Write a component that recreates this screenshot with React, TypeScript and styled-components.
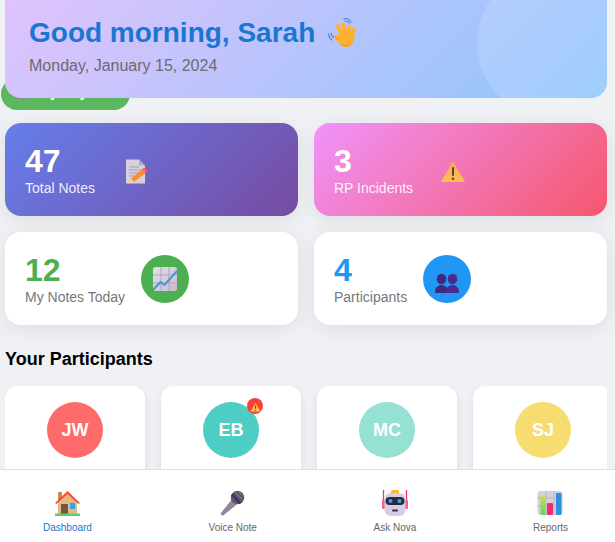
import React from "react";
import styled, { createGlobalStyle } from "styled-components";

const GlobalStyle = createGlobalStyle`
  html, body {
    margin: 0;
    height: 100%;
    overflow: hidden;
    background: #f0f1f5;
    font-family: "Liberation Sans", Arial, sans-serif;
  }
  * { box-sizing: border-box; }
`;

const Page = styled.div`
  position: relative;
  height: 542px;
  overflow: hidden;
  padding: 0 8px 0 5px;
`;

const Header = styled.header`
  position: relative;
  z-index: 1;
  height: 98px;
  padding: 17px 24px 0;
  overflow: hidden;
  border-radius: 0 0 16px 16px;
  background: linear-gradient(135deg, #e0c3fc 0%, #8ec5fc 100%);
  &::after {
    content: "";
    position: absolute;
    top: -32px;
    right: -20px;
    width: 150px;
    height: 150px;
    border-radius: 50%;
    background: rgba(255, 255, 255, 0.15);
  }
`;

const Greeting = styled.h1`
  display: flex;
  align-items: center;
  margin: 0 0 8px;
  height: 32px;
  font-size: 28px;
  font-weight: 700;
  color: #1976d2;
`;

const DateLine = styled.p`
  margin: 0;
  font-size: 16px;
  color: #6f6a6e;
`;

const WaveSlot = styled.span`
  display: flex;
  margin-left: 12px;
`;

const HiddenPill = styled.div`
  position: absolute;
  top: 78px;
  left: 1px;
  width: 129px;
  height: 32px;
  display: flex;
  align-items: center;
  gap: 4px;
  padding: 0 14px 4px;
  border-radius: 16px;
  background: #5cb85f;
  color: #fff;
  font-size: 14px;
  font-weight: 700;
`;

const PillDot = styled.span`
  width: 14px;
  height: 14px;
  border-radius: 3px;
  background: #8d8d99;
`;

const StatGrid = styled.section`
  display: grid;
  grid-template-columns: 1fr 1fr;
  gap: 16px;
  margin-top: 25px;
`;

const cardBackgrounds = {
  notes: "linear-gradient(135deg, #667eea 0%, #764ba2 100%)",
  incidents: "linear-gradient(135deg, #f093fb 0%, #f5576c 100%)",
  plain: "#fff",
};

const StatCard = styled.div<{ $kind: keyof typeof cardBackgrounds }>`
  display: flex;
  align-items: center;
  gap: 16px;
  height: 93px;
  padding: 20px;
  border-radius: 16px;
  background: ${(props) => cardBackgrounds[props.$kind]};
  box-shadow: 0 4px 20px rgba(0, 0, 0, 0.08);
`;

const StatValue = styled.div<{ $color: string }>`
  font-size: 32px;
  font-weight: 700;
  color: ${(props) => props.$color};
`;

const StatLabel = styled.div<{ $light?: boolean }>`
  font-size: 14px;
  white-space: nowrap;
  color: ${(props) => (props.$light ? "rgba(255, 255, 255, 0.9)" : "#777")};
`;

const StatIcon = styled.div<{ $color?: string }>`
  flex: 0 0 48px;
  width: 48px;
  height: 48px;
  display: flex;
  align-items: center;
  justify-content: center;
  border-radius: 50%;
  background: ${(props) => props.$color || "transparent"};
`;

const SectionTitle = styled.h2`
  margin: 24px 0 16px;
  font-size: 18px;
  line-height: 21px;
  font-weight: 700;
  color: #000;
`;

const ParticipantRail = styled.div`
  display: flex;
  gap: 16px;
  overflow: hidden;
`;

const ParticipantCard = styled.div`
  flex: 0 0 140px;
  height: 150px;
  padding-top: 16px;
  display: flex;
  justify-content: center;
  border-radius: 12px;
  background: #fff;
  box-shadow: 0 2px 10px rgba(0, 0, 0, 0.08);
`;

const Avatar = styled.div<{ $color: string }>`
  position: relative;
  width: 56px;
  height: 56px;
  display: flex;
  align-items: center;
  justify-content: center;
  border-radius: 50%;
  background: ${(props) => props.$color};
  color: #fff;
  font-size: 18px;
  font-weight: 700;
`;

const AlertBadge = styled.span`
  position: absolute;
  top: -4px;
  right: -4px;
  width: 16px;
  height: 16px;
  display: flex;
  align-items: center;
  justify-content: center;
  border-radius: 50%;
  background: #f44336;
`;

const BottomNav = styled.nav`
  position: fixed;
  z-index: 2;
  left: 0;
  right: 0;
  bottom: 0;
  height: 73px;
  display: flex;
  justify-content: space-between;
  padding: 20px 47px 0 43px;
  background: #fff;
  border-top: 1px solid #e0e0e0;
`;

const NavItem = styled.div<{ $active?: boolean }>`
  display: flex;
  flex-direction: column;
  align-items: center;
  gap: 6px;
  font-size: 10px;
  line-height: 12px;
  color: ${(props) => (props.$active ? "#1976d2" : "#666")};
`;

const WaveIcon = () => (
  <svg width="32" height="32" viewBox="0 0 32 32" fill="none">
    <g stroke="#4a90d9" strokeWidth="1.2" strokeLinecap="round">
      <path d="M18 4.500c1.800-.6 3.400 0 4.200 1.800" />
      <path d="M17 1.800c3-.8 5.500.5 7 3.400" />
      <path d="M4.500 16c-.4 1.800.2 3.400 2 4.600" />
      <path d="M1.800 16.500c-.3 2.800.8 5 3.200 6.400" />
    </g>
    <g stroke="#ffb02e" strokeWidth="4" strokeLinecap="round">
      <path d="M10.800 9l4 8" />
      <path d="M16.500 7.500l2 9" />
      <path d="M22 10l-.5 8" />
      <path d="M27 12.500l-2.500 7" />
    </g>
    <ellipse cx="19" cy="21" rx="8.500" ry="9" fill="#ffb02e" />
    <path d="M9.500 18.500c-1.500-1.300-3-.3-2.500 1l2.500 4.500 3-2z" fill="#ffa726" />
    <path d="M12 27c4 3.500 11 3.500 14-1-3 2-9 2.500-14 1z" fill="#f59a1f" />
  </svg>
);

const NoteIcon = () => (
  <svg width="24" height="28" viewBox="0 0 24 28">
    <path d="M3 3.500h13l6 6v18H3z" fill="#d8d0de" />
    <path d="M16 3.500l6 6h-6z" fill="#b5a9c2" />
    <path d="M6 11h10M6 14h13M6 17h11M6 20h6" stroke="#a79db3" strokeWidth="1" />
    <path d="M6 27.500l2-5L19 13.500l3.500 3.500L11 26z" fill="#ff8c33" />
    <path d="M19 13.500l1.500-1.500a1 1 0 0 1 1.400 0l2 2a1 1 0 0 1 0 1.400L22.500 17z" fill="#f8605c" />
    <path d="M6 27.500l2-5 3 3.500z" fill="#ffd3a8" />
  </svg>
);

const WarningIcon = ({ size = 26 }: { size?: number }) => (
  <svg width={size} height={size} viewBox="0 0 26 26">
    <defs>
      <linearGradient id="warnFill" x1="0" y1="0" x2="0" y2="1">
        <stop offset="0" stopColor="#ffa14f" />
        <stop offset="1" stopColor="#ffc24d" />
      </linearGradient>
    </defs>
    <path d="M13 4L25 25H1z" fill="url(#warnFill)" />
    <rect x="12" y="10" width="2" height="9" rx="1" fill="#4a4450" />
    <circle cx="13" cy="21.800" r="1.200" fill="#4a4450" />
  </svg>
);

const ChartIcon = () => (
  <svg width="26" height="26" viewBox="0 0 26 26">
    <defs>
      <linearGradient id="chartPaper" x1="0" y1="0" x2="1" y2="1">
        <stop offset="0" stopColor="#e4dfe9" />
        <stop offset="1" stopColor="#c7bdd0" />
      </linearGradient>
    </defs>
    <rect x="1" y="1" width="24" height="24" rx="2.500" fill="url(#chartPaper)" />
    <path d="M9 1v24M17 1v24M1 9h24M1 17h24" stroke="#b0a4ba" strokeWidth="1" />
    <path d="M1 24l7.500-8 4 3L25 5" fill="none" stroke="#3f97e0" strokeWidth="2" />
  </svg>
);

const PeopleIcon = () => (
  <svg width="26" height="32" viewBox="0 0 26 32">
    <g fill="#43267e">
      <ellipse cx="7.500" cy="16" rx="4.800" ry="5.200" />
      <path d="M1 30c0-3.500.5-5.500 2.500-6.500L6 22h3l2.500 1.500c2 1 2.500 3 2.500 6.500z" />
    </g>
    <g fill="#4d2b8c">
      <ellipse cx="18.500" cy="16" rx="4.800" ry="5.200" />
      <path d="M12 30c0-3.500.5-5.500 2.500-6.500L17 22h3l2.500 1.500c2 1 2.500 3 2.500 6.500z" />
    </g>
  </svg>
);

const HouseIcon = () => (
  <svg width="27" height="26" viewBox="0 0 27 26">
    <rect x="4" y="2" width="4" height="8" fill="#c98b5a" />
    <path d="M4 11L13.500 3 23 11v13H4z" fill="#e8b884" />
    <path d="M1 13L13.500 1 26 13l-1.500 1L13.500 4 2.500 14z" fill="#f0512d" />
    <rect x="7" y="14" width="7" height="10" rx="1" fill="#7a5245" />
    <rect x="16" y="13" width="5" height="6" fill="#2fa7f0" />
    <rect x="1" y="23.500" width="25" height="2.500" fill="#4fd46b" />
  </svg>
);

const MicIcon = () => (
  <svg width="26" height="26" viewBox="0 0 26 26">
    <path d="M12.500 8.500L1 23c-.5.800 0 1.500.5 2 .6.500 1.300.7 2 .2L18 13.500z" fill="#8f8896" />
    <circle cx="17.500" cy="7.500" r="6.800" fill="#5f5869" />
    <path d="M12 4.500l8.500 9" stroke="#43286f" strokeWidth="2.500" />
    <path d="M15 2l7 7M18.500 1.500l4 4" stroke="#857e8f" strokeWidth="1" />
  </svg>
);

const RobotIcon = () => (
  <svg width="26" height="26" viewBox="0 0 26 26">
    <path d="M1.500 0v14M24.500 0v14" stroke="#f4326c" strokeWidth="1.300" />
    <rect x="0" y="10" width="3" height="9" rx="1" fill="#f4608c" />
    <rect x="23" y="10" width="3" height="9" rx="1" fill="#f4608c" />
    <rect x="9" y="0" width="8" height="4" rx="1.500" fill="#fcb72f" />
    <rect x="2.500" y="3" width="21" height="23" rx="6" fill="#d9cbe3" />
    <rect x="3.500" y="7" width="19" height="8" rx="4" fill="#2b2a3b" />
    <circle cx="8.500" cy="11" r="2" fill="#2aa7f5" />
    <circle cx="17.500" cy="11" r="2" fill="#2aa7f5" />
    <rect x="10" y="19.500" width="6" height="2" rx="1" fill="#3a3446" />
  </svg>
);

const BarsIcon = () => (
  <svg width="26" height="26" viewBox="0 0 26 26">
    <defs>
      <linearGradient id="barGreen" x1="0" y1="0" x2="0" y2="1">
        <stop offset="0" stopColor="#c9e04a" />
        <stop offset="1" stopColor="#62d45f" />
      </linearGradient>
    </defs>
    <rect x="0.500" y="1" width="25" height="24" rx="3" fill="#d6cfdc" />
    <path d="M9 1v24M17 1v24M0.500 8h25M0.500 16h25" stroke="#bdb3c5" strokeWidth="1" />
    <rect x="3.500" y="6" width="5" height="19" rx="1" fill="url(#barGreen)" />
    <rect x="10" y="13" width="6" height="12" rx="1" fill="#ee2e72" />
    <rect x="19" y="3" width="5.500" height="22" rx="1" fill="#2a90e0" />
  </svg>
);

const participants = [
  { initials: "JW", color: "#ff6b6b" },
  { initials: "EB", color: "#4ecdc4", alert: true },
  { initials: "MC", color: "#95e1d3" },
  { initials: "SJ", color: "#f7dc6f" },
];

const App: React.FC = () => {
  return (
    <Page>
      <GlobalStyle />
      <HiddenPill>
        <PillDot />
        Say Day
      </HiddenPill>
      <Header>
        <Greeting>
          Good morning, Sarah
          <WaveSlot>
            <WaveIcon />
          </WaveSlot>
        </Greeting>
        <DateLine>Monday, January 15, 2024</DateLine>
      </Header>

      <StatGrid>
        <StatCard $kind="notes">
          <div>
            <StatValue $color="#fff">47</StatValue>
            <StatLabel $light>Total Notes</StatLabel>
          </div>
          <StatIcon>
            <NoteIcon />
          </StatIcon>
        </StatCard>
        <StatCard $kind="incidents">
          <div>
            <StatValue $color="#fff">3</StatValue>
            <StatLabel $light>RP Incidents</StatLabel>
          </div>
          <StatIcon>
            <WarningIcon />
          </StatIcon>
        </StatCard>
        <StatCard $kind="plain">
          <div>
            <StatValue $color="#4caf50">12</StatValue>
            <StatLabel>My Notes Today</StatLabel>
          </div>
          <StatIcon $color="#4caf50">
            <ChartIcon />
          </StatIcon>
        </StatCard>
        <StatCard $kind="plain">
          <div>
            <StatValue $color="#2196f3">4</StatValue>
            <StatLabel>Participants</StatLabel>
          </div>
          <StatIcon $color="#2196f3">
            <PeopleIcon />
          </StatIcon>
        </StatCard>
      </StatGrid>

      <SectionTitle>Your Participants</SectionTitle>
      <ParticipantRail>
        {participants.map((person) => (
          <ParticipantCard key={person.initials}>
            <Avatar $color={person.color}>
              {person.initials}
              {person.alert && (
                <AlertBadge>
                  <WarningIcon size={11} />
                </AlertBadge>
              )}
            </Avatar>
          </ParticipantCard>
        ))}
      </ParticipantRail>

      <BottomNav>
        <NavItem $active>
          <HouseIcon />
          Dashboard
        </NavItem>
        <NavItem>
          <MicIcon />
          Voice Note
        </NavItem>
        <NavItem>
          <RobotIcon />
          Ask Nova
        </NavItem>
        <NavItem>
          <BarsIcon />
          Reports
        </NavItem>
      </BottomNav>
    </Page>
  );
};

export default App;
